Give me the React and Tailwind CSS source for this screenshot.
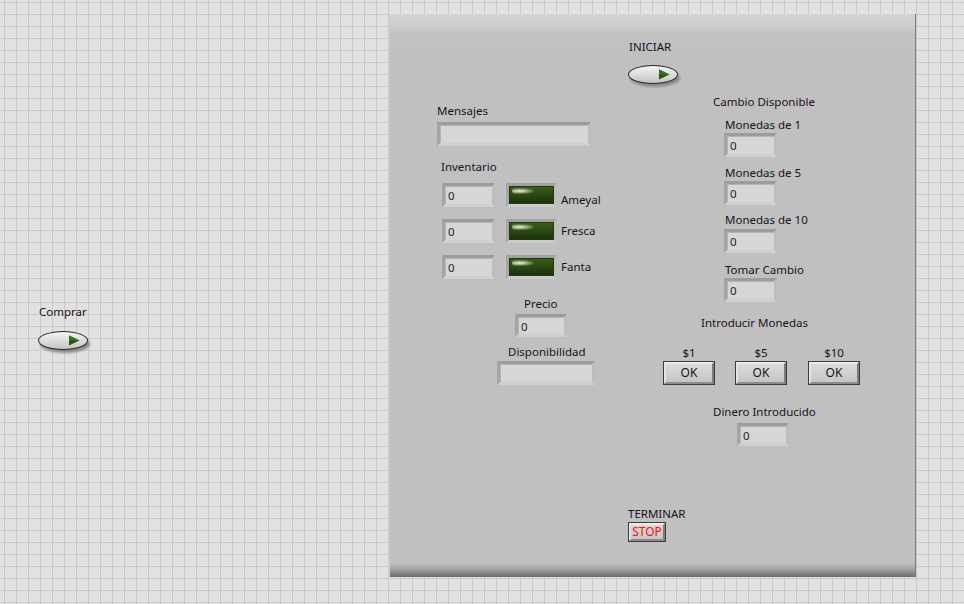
import React from 'react';

const font = { fontFamily: '"Noto Sans", "Open Sans", sans-serif' };

function Label({ children, className = '' }) {
    return <div className={`text-[11.5px] leading-[14px] text-[#1b1020] whitespace-nowrap ${className}`}>{children}</div>;
}

// sunken numeric / string indicator
function Box({ className = '', value }) {
    return (
        <div className={`shrink-0 border-[3px] border-t-[#9c9c9c] border-l-[#a4a4a4] border-b-[#cfcfcf] border-r-[#bdbdbd] bg-[#d6d6d6] ${className}`}>
            <div className="h-full border-t border-l border-t-[#b4b4b4] border-l-[#b4b4b4] pl-[2px] text-[11.5px] leading-[17px] text-[#1e1e1e]">
                {value}
            </div>
        </div>
    );
}

function Led() {
    return (
        <div className="h-[24px] w-[51px] shrink-0 border-[3px] border-t-[#a2a2a2] border-l-[#a6a6a6] border-b-[#cacaca] border-r-[#bcbcbc] bg-[#2a4512]">
            <div className="relative h-full overflow-hidden border border-[#22380e] bg-[linear-gradient(to_bottom,#3a5c1c,#1b3209)]">
                <div className="absolute left-[2px] top-[1px] h-[6px] w-[22px] rounded-full bg-[radial-gradient(ellipse_at_35%_50%,#eef2e8_0%,#a9bb96_30%,#5d7a40_60%,transparent_80%)]"></div>
            </div>
        </div>
    );
}

function Switch() {
    return (
        <div className="relative h-[22px] w-[52px]">
            <div className="absolute left-[2px] top-[4px] h-[18px] w-[50px] rounded-[50%] bg-[#8a8a8a] blur-[1px]"></div>
            <div className="absolute left-0 top-0 h-[19px] w-[50px] rounded-[50%] border border-[#2a2a2a] bg-[linear-gradient(to_bottom,#f4f4f4,#d8d8d8_60%,#c4c4c4)]">
                <svg className="absolute right-[7px] top-[3px]" width="12" height="11" viewBox="0 0 12 11">
                    <path d="M1 0.5 L11.5 5.5 L1 10.5 Z" fill="#2a5512" />
                    <path d="M1 0.5 L11.5 5.5 L1 5.5 Z" fill="#3a721c" />
                </svg>
            </div>
        </div>
    );
}

function OkButton({ className = 'h-[24px] w-[52px]', text = 'OK', red }) {
    return (
        <div className={`shrink-0 border border-[#3c3c3c] bg-[#c8c8c8] ${className}`}>
            <div className="flex h-full items-center justify-center border-[2px] border-t-[#ececec] border-l-[#e4e4e4] border-b-[#8c8c8c] border-r-[#7c7c7c] bg-[linear-gradient(to_bottom,#dadada,#c6c6c6)]">
                <span className={`text-[12px] leading-[14px] ${red ? 'text-[#ff1010]' : 'text-[#141414]'}`}>{text}</span>
            </div>
        </div>
    );
}

function InventoryRow({ name, labelPt }) {
    return (
        <div className="flex items-start pl-[5px]">
            <Box className="h-[24px] w-[53px]" value="0" />
            <div className="ml-[11px]"><Led /></div>
            <Label className={`ml-[4px] ${labelPt}`}>{name}</Label>
        </div>
    );
}

function Coins({ label, mt, boxMt }) {
    return (
        <div className={`flex flex-col items-start pl-[61px] ${mt}`}>
            <Label className="pl-[1px]">{label}</Label>
            <Box className={`h-[24px] w-[53px] ${boxMt}`} value="0" />
        </div>
    );
}

function Coin({ label }) {
    return (
        <div className="flex w-[52px] flex-col items-center">
            <Label>{label}</Label>
            <div className="mt-[1px] w-full"><OkButton /></div>
        </div>
    );
}

export default function App() {
    return (
        <div
            style={font}
            className="flex h-[604px] w-[964px] items-start overflow-hidden bg-[#e1e1e1] bg-[linear-gradient(to_right,#c9c9c9_1px,transparent_1px),linear-gradient(to_bottom,#c9c9c9_1px,transparent_1px)] bg-[size:12px_12px] bg-[position:4px_2px]"
        >
            {/* control left outside the panel */}
            <div className="ml-[38px] mt-[305px] flex w-[52px] flex-col gap-[12px]">
                <Label className="pl-[1px]">Comprar</Label>
                <Switch />
            </div>

            {/* front panel */}
            <div className="relative ml-[298px] mt-[14px] flex h-[563px] w-[528px] flex-col border-r border-r-[#7a7a7a] bg-[linear-gradient(to_bottom,#d3d3d3_0px,#cfcfcf_11px,#c2c2c2_20px,#c0c0c0_40px,#c0c0c0_calc(100%-14px),#a4a4a4_calc(100%-8px),#6c6c6c_100%)] pt-[26px] pb-[35px]">
                <div className="absolute left-0 top-0 h-full w-[2px] bg-[#cdcdcd]"></div>

                <div className="flex flex-col gap-[11px] pl-[240px]">
                    <Label className="pl-[1px]">INICIAR</Label>
                    <Switch />
                </div>

                <div className="mt-[8px] flex">
                    {/* left column */}
                    <div className="ml-[49px] mt-[9px] flex w-[160px] flex-col items-start">
                        <Label>Mensajes</Label>
                        <Box className="mt-[4px] h-[24px] w-[154px]" />
                        <Label className="mt-[14px] pl-[4px]">Inventario</Label>
                        <div className="mt-[9px] flex flex-col gap-[12px]">
                            <InventoryRow name="Ameyal" labelPt="pt-[10px]" />
                            <InventoryRow name="Fresca" labelPt="pt-[5px]" />
                            <InventoryRow name="Fanta" labelPt="pt-[5px]" />
                        </div>
                        <Label className="mt-[18px] pl-[87px]">Precio</Label>
                        <div className="mt-[3px] pl-[78px]"><Box className="h-[23px] w-[52px]" value="0" /></div>
                        <Label className="mt-[8px] pl-[71px]">Disponibilidad</Label>
                        <div className="mt-[2px] pl-[60px]"><Box className="h-[24px] w-[98px]" /></div>
                    </div>

                    {/* right column */}
                    <div className="ml-[66px] flex w-[200px] flex-col items-start">
                        <Label className="pl-[50px]">Cambio Disponible</Label>
                        <Coins label="Monedas de 1" mt="mt-[9px]" boxMt="mt-[1px]" />
                        <Coins label="Monedas de 5" mt="mt-[9px]" boxMt="mt-[1px]" />
                        <Coins label="Monedas de 10" mt="mt-[8px]" boxMt="mt-[2px]" />
                        <Coins label="Tomar Cambio" mt="mt-[10px]" boxMt="mt-[1px]" />
                        <Label className="mt-[14px] pl-[38px]">Introducir Monedas</Label>
                        <div className="mt-[16px] flex gap-[20px]">
                            <Coin label="$1" />
                            <Coin label="$5" />
                            <div className="ml-[1px]"><Coin label="$10" /></div>
                        </div>
                        <Label className="mt-[20px] pl-[50px]">Dinero Introducido</Label>
                        <div className="mt-[4px] pl-[74px]"><Box className="h-[23px] w-[52px]" value="0" /></div>
                    </div>
                </div>

                <div className="mt-auto flex flex-col items-start gap-[1px] pl-[240px]">
                    <Label>TERMINAR</Label>
                    <OkButton className="h-[20px] w-[38px]" text="STOP" red />
                </div>
            </div>
        </div>
    );
}
